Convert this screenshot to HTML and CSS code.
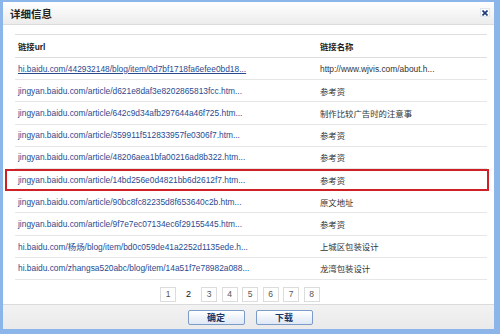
FILE: index.html
```html
<!DOCTYPE html>
<html lang="zh-CN">
<head>
  <meta charset="UTF-8" />
  <title>详细信息</title>
  <link rel="stylesheet" href="styles.css">
</head>
<body>
  <div class="dialog">
    <div class="titlebar">
      <span class="title">详细信息</span>
      <span class="close" title="关闭">
        <svg width="6" height="6" viewBox="0 0 6 6"><path d="M0.5 0.5 L5.5 5.5 M5.5 0.5 L0.5 5.5" stroke="#1c3a78" stroke-width="1.6"/></svg>
      </span>
    </div>

    <div class="content">
      <table class="links">
        <colgroup>
          <col class="col-url">
          <col class="col-name">
        </colgroup>
        <tr>
          <th>链接url</th>
          <th>链接名称</th>
        </tr>
        <tr>
          <td><a href="#" class="hover">hi.baidu.com/442932148/blog/item/0d7bf1718fa6efee0bd18...</a></td>
          <td>http://www.wjvis.com/about.h...</td>
        </tr>
        <tr>
          <td><a href="#">jingyan.baidu.com/article/d621e8daf3e8202865813fcc.htm...</a></td>
          <td>参考资</td>
        </tr>
        <tr>
          <td><a href="#">jingyan.baidu.com/article/642c9d34afb297644a46f725.htm...</a></td>
          <td>制作比较广告时的注意事</td>
        </tr>
        <tr>
          <td><a href="#">jingyan.baidu.com/article/359911f512833957fe0306f7.htm...</a></td>
          <td>参考资</td>
        </tr>
        <tr>
          <td><a href="#">jingyan.baidu.com/article/48206aea1bfa00216ad8b322.htm...</a></td>
          <td>参考资</td>
        </tr>
        <tr>
          <td><a href="#">jingyan.baidu.com/article/14bd256e0d4821bb6d2612f7.htm...</a></td>
          <td>参考资</td>
        </tr>
        <tr>
          <td><a href="#">jingyan.baidu.com/article/90bc8fc82235d8f653640c2b.htm...</a></td>
          <td>原文地址</td>
        </tr>
        <tr>
          <td><a href="#">jingyan.baidu.com/article/9f7e7ec07134ec6f29155445.htm...</a></td>
          <td>参考资</td>
        </tr>
        <tr>
          <td><a href="#">hi.baidu.com/杨炀/blog/item/bd0c059de41a2252d1135ede.h...</a></td>
          <td>上城区包装设计</td>
        </tr>
        <tr>
          <td><a href="#">hi.baidu.com/zhangsa520abc/blog/item/14a51f7e78982a088...</a></td>
          <td>龙湾包装设计</td>
        </tr>
      </table>

      <!-- pager -->
      <div class="pager">
        <a href="#" class="page">1</a>
        <span class="page current">2</span>
        <a href="#" class="page">3</a>
        <a href="#" class="page">4</a>
        <a href="#" class="page">5</a>
        <a href="#" class="page">6</a>
        <a href="#" class="page">7</a>
        <a href="#" class="page">8</a>
      </div>
    </div>

    <div class="footer">
      <button class="btn">确定</button>
      <button class="btn">下载</button>
    </div>

    <!-- red marker around the selected row -->
    <div class="marker"></div>
  </div>
</body>
</html>
```

FILE: styles.css
```css
body {
  margin: 0;
  font-family: "Liberation Sans", "Noto Sans CJK SC", sans-serif;
  background: #fff;
}
.dialog {
  position: relative;
  width: 500px;
  height: 334px;
  box-sizing: border-box;
  border-style: solid;
  border-color: #8cb5ea;
  border-width: 2px 6px 5px 3px;
  background: #fff;
  display: flex;
  flex-direction: column;
}
.titlebar {
  height: 22px;
  flex: none;
  display: flex;
  align-items: center;
  justify-content: space-between;
  padding: 0 4px 0 7px;
  border-bottom: 1px solid #dcdcdc;
  background: linear-gradient(#ffffff, #ececec);
}
.title {
  font-size: 10.5px;
  font-weight: bold;
  color: #222;
}
.close {
  width: 10px;
  height: 9px;
  box-sizing: border-box;
  border: 1px solid #e2e6ee;
  background: #fafbfd;
  display: flex;
  align-items: center;
  justify-content: center;
  margin-top: -1px;
}
.close svg {
  display: block;
}
.content {
  flex: 1;
  padding: 9px 7px 0 12px;
}
.links {
  width: 100%;
  border-collapse: collapse;
  table-layout: fixed;
  font-size: 8.4px;
}
.col-url {
  width: 305px;
}
.links th {
  height: 22px;
  text-align: left;
  font-weight: bold;
  color: #222;
  border-top: 1px solid #dedede;
  border-bottom: 1px solid #dedede;
  padding: 0;
}
.links th:first-child,
.links td:first-child {
  padding-left: 3px;
}
.links td {
  height: 21.2px;
  padding: 0;
  color: #333;
  white-space: nowrap;
  overflow: hidden;
  border-bottom: 1px solid #e6e6e6;
}
.links a {
  color: #2a4a90;
  text-decoration: none;
}
.links a.hover {
  text-decoration: underline;
}
.pager {
  display: flex;
  gap: 4.5px;
  padding-left: 145px;
  margin-top: 7px;
}
.page {
  width: 16px;
  height: 15px;
  box-sizing: border-box;
  border: 1px solid #dcdcdc;
  display: flex;
  align-items: center;
  justify-content: center;
  font-size: 8.5px;
  color: #555;
  text-decoration: none;
}
.page.current {
  border-color: transparent;
  color: #111;
  font-size: 9px;
}
.footer {
  height: 24px;
  flex: none;
  border-top: 1px solid #dadada;
  background: linear-gradient(#f2f2f2, #eaeaea);
  display: flex;
  align-items: center;
  justify-content: center;
  gap: 11px;
  padding-left: 3px;
}
.btn {
  width: 57px;
  height: 15px;
  padding: 0;
  border: 1px solid #7c9bc8;
  border-radius: 2px;
  background: linear-gradient(#ffffff, #dfe8f5);
  font-family: "Liberation Sans", "Noto Sans CJK SC", sans-serif;
  font-size: 9px;
  font-weight: bold;
  color: #1d3563;
  cursor: pointer;
}
.marker {
  position: absolute;
  left: 2px;
  top: 167px;
  width: 484px;
  height: 22px;
  box-sizing: border-box;
  border: 2px solid #cf2026;
}
```
